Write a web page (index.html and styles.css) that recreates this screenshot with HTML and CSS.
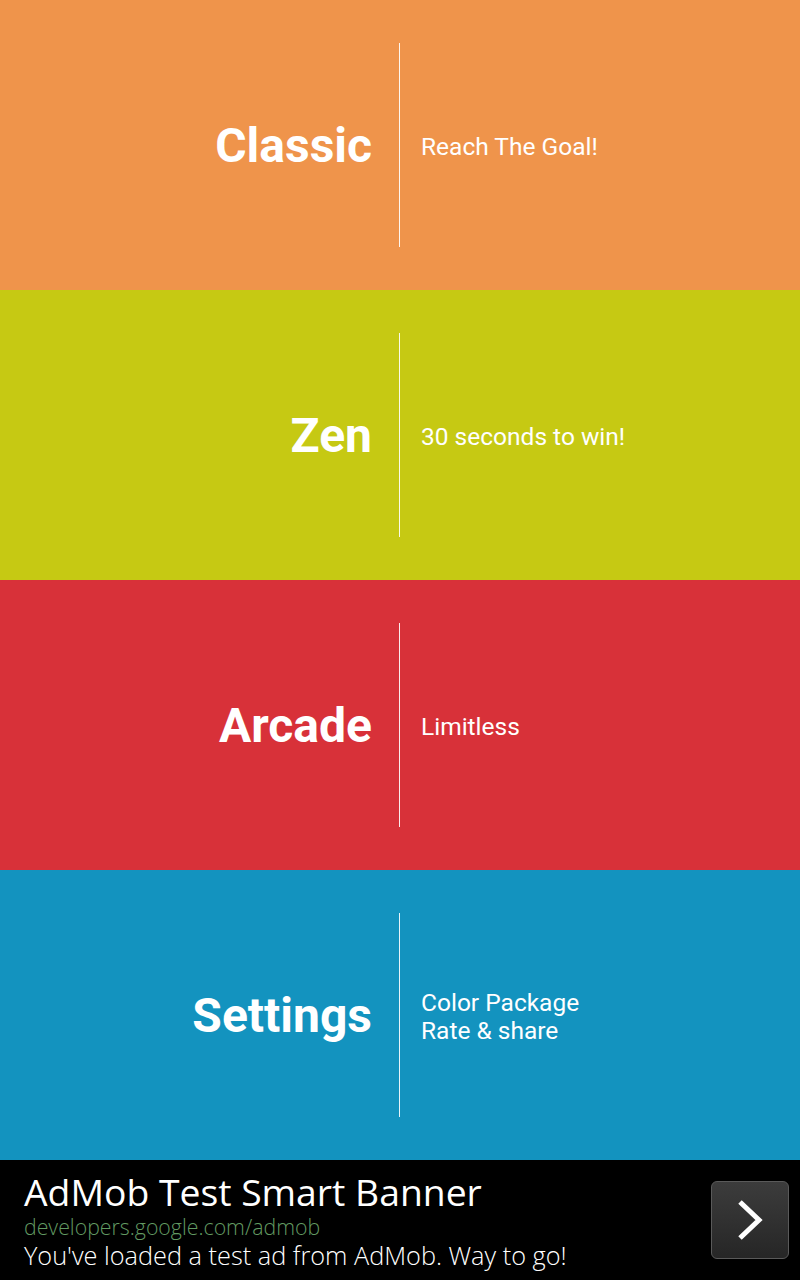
FILE: index.html
```html
<!DOCTYPE html>
<html>
<head>
<meta charset="utf-8">
<link rel="stylesheet" href="styles.css">
</head>
<body>
<div class="app">
  <div class="mode orange">
    <div class="title">Classic</div>
    <div class="divider"></div>
    <div class="desc">Reach The Goal!</div>
  </div>
  <div class="mode lime">
    <div class="title">Zen</div>
    <div class="divider"></div>
    <div class="desc">30 seconds to win!</div>
  </div>
  <div class="mode red">
    <div class="title">Arcade</div>
    <div class="divider"></div>
    <div class="desc">Limitless</div>
  </div>
  <div class="mode blue">
    <div class="title">Settings</div>
    <div class="divider"></div>
    <div class="desc">Color Package<br>Rate &amp; share</div>
  </div>
  <div class="ad">
    <div class="ad-text">
      <div class="ad-title">AdMob Test Smart Banner</div>
      <div class="ad-url">developers.google.com/admob</div>
      <div class="ad-body">You've loaded a test ad from AdMob. Way to go!</div>
    </div>
    <div class="ad-btn">
      <svg width="30" height="42" viewBox="0 0 30 42"><polyline points="5,3 24,21 5,39" fill="none" stroke="#fff" stroke-width="5" stroke-linecap="butt"/></svg>
    </div>
  </div>
</div>
</body>
</html>
```

FILE: styles.css
```css
html, body {
  margin: 0;
  padding: 0;
}
body {
  width: 800px;
  height: 1280px;
  overflow: hidden;
  font-family: Roboto, "Liberation Sans", sans-serif;
  color: #fff;
}
.app {
  display: flex;
  flex-direction: column;
  height: 1280px;
}
.mode {
  height: 290px;
  display: grid;
  grid-template-columns: 399px 1px 1fr;
  align-items: center;
}
.orange { background: #ef944b; }
.lime { background: #c6c913; }
.red { background: #d83139; }
.blue { background: #1393bf; }
.title {
  text-align: right;
  padding-right: 27px;
  padding-top: 2px;
  font-weight: 700;
  font-size: 48px;
  line-height: 1;
}
.divider {
  height: 204px;
  background: rgba(255,255,255,0.9);
}
.desc {
  padding-left: 21px;
  padding-top: 4px;
  font-size: 24.5px;
  line-height: 28px;
}
.ad {
  flex: 1;
  background: #000;
  display: flex;
  align-items: center;
  justify-content: space-between;
  padding: 2px 11px 0 24px;
}
.ad-title {
  font-family: "Open Sans", sans-serif;
  font-size: 37.3px;
  line-height: 38px;
}
.ad-url {
  font-family: "Open Sans", sans-serif;
  font-weight: 300;
  font-size: 21.3px;
  line-height: 28px;
  margin-top: 2px;
  color: #629a62;
}
.ad-body {
  font-family: "Open Sans", sans-serif;
  font-weight: 300;
  font-size: 25.3px;
  line-height: 28px;
}
.ad-btn {
  width: 76px;
  height: 76px;
  margin-top: -2px;
  border: 1px solid #5a5a5a;
  border-radius: 6px;
  background: linear-gradient(#3c3c3c, #262626);
  display: flex;
  align-items: center;
  justify-content: center;
}
```
